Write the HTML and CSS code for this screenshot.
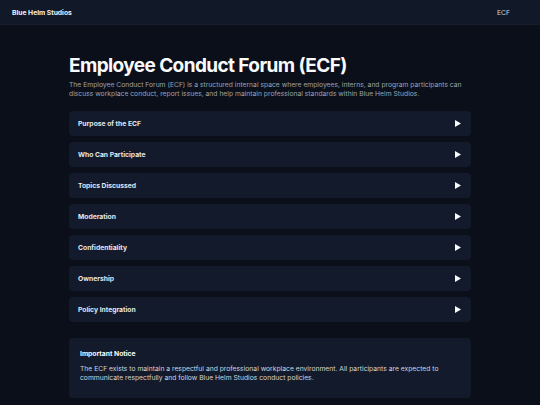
FILE: index.html
```html
<!DOCTYPE html>
<html lang="en">
<head>
    <meta charset="UTF-8">
    <meta name="viewport" content="width=device-width, initial-scale=1.0">
    <title>Employee Conduct Forum</title>
    <link rel="stylesheet" href="styles.css">
</head>
<body>
    <div class="top-nav">
        <div class="brand">Blue Helm Studios</div>
        <div class="nav-link">ECF</div>
    </div>

    <div class="container">
        <h1>Employee Conduct Forum (ECF)</h1>
        <p class="intro">
            The Employee Conduct Forum (ECF) is a structured internal space where employees, interns, and program participants can
            discuss workplace conduct, report issues, and help maintain professional standards within Blue Helm Studios.
        </p>

        <div class="sections">
            <div class="section-item"><span>Purpose of the ECF</span><svg class="arrow" viewBox="0 0 6 7"><polygon points="0,0 6,3.5 0,7" /></svg></div>
            <div class="section-item"><span>Who Can Participate</span><svg class="arrow" viewBox="0 0 6 7"><polygon points="0,0 6,3.5 0,7" /></svg></div>
            <div class="section-item"><span>Topics Discussed</span><svg class="arrow" viewBox="0 0 6 7"><polygon points="0,0 6,3.5 0,7" /></svg></div>
            <div class="section-item"><span>Moderation</span><svg class="arrow" viewBox="0 0 6 7"><polygon points="0,0 6,3.5 0,7" /></svg></div>
            <div class="section-item"><span>Confidentiality</span><svg class="arrow" viewBox="0 0 6 7"><polygon points="0,0 6,3.5 0,7" /></svg></div>
            <div class="section-item"><span>Ownership</span><svg class="arrow" viewBox="0 0 6 7"><polygon points="0,0 6,3.5 0,7" /></svg></div>
            <div class="section-item"><span>Policy Integration</span><svg class="arrow" viewBox="0 0 6 7"><polygon points="0,0 6,3.5 0,7" /></svg></div>
        </div>

        <div class="notice">
            <h2>Important Notice</h2>
            <p>The ECF exists to maintain a respectful and professional workplace environment. All participants are expected to
            communicate respectfully and follow Blue Helm Studios conduct policies.</p>
        </div>
    </div>
</body>
</html>
```

FILE: styles.css
```css
/* Global styles */
* {
    margin: 0;
    padding: 0;
    box-sizing: border-box;
}

body {
    background-color: #0b0f1a;
    font-family: Inter, 'Liberation Sans', Arial, sans-serif;
    color: #f3f4f6;
}

/* Top navigation */
.top-nav {
    background-color: #111827;
    border-bottom: 1px solid #151c2b;
    height: 25px;
    padding: 0 12px;
    display: flex;
    justify-content: space-between;
    align-items: center;
}

.brand {
    font-size: 6.75px;
    font-weight: 700;
    color: #f3f4f6;
}

.nav-link {
    font-size: 6.75px;
    color: #d1d5db;
    margin-right: 18px;
}

.container {
    width: 402px;
    margin: 0 auto;
    padding-top: 29px;
}

h1 {
    font-size: 19px;
    line-height: 24px;
    font-weight: 700;
    letter-spacing: -0.6px;
    color: #f9fafb;
    margin-bottom: 2px;
}

.intro {
    font-size: 6.75px;
    line-height: 9px;
    color: #9ca3af;
    margin-bottom: 13px;
}

.section-item {
    background-color: #121a2c;
    border-radius: 4px;
    height: 25px;
    margin-bottom: 6px;
    padding: 0 10px 0 9px;
    display: flex;
    justify-content: space-between;
    align-items: center;
    font-size: 6.75px;
    font-weight: 700;
    color: #e5e7eb;
}

.arrow {
    width: 6px;
    height: 7px;
    fill: #f9fafb;
}

/* Notice box */
.notice {
    margin-top: 16px;
    background-color: #121a2c;
    border-radius: 4px;
    padding: 11px 11px 16px 11px;
}

.notice h2 {
    font-size: 6.75px;
    line-height: 9px;
    font-weight: 700;
    color: #f9fafb;
    margin-bottom: 6px;
}

.notice p {
    font-size: 6.75px;
    line-height: 9px;
    color: #d1d5db;
}
```
